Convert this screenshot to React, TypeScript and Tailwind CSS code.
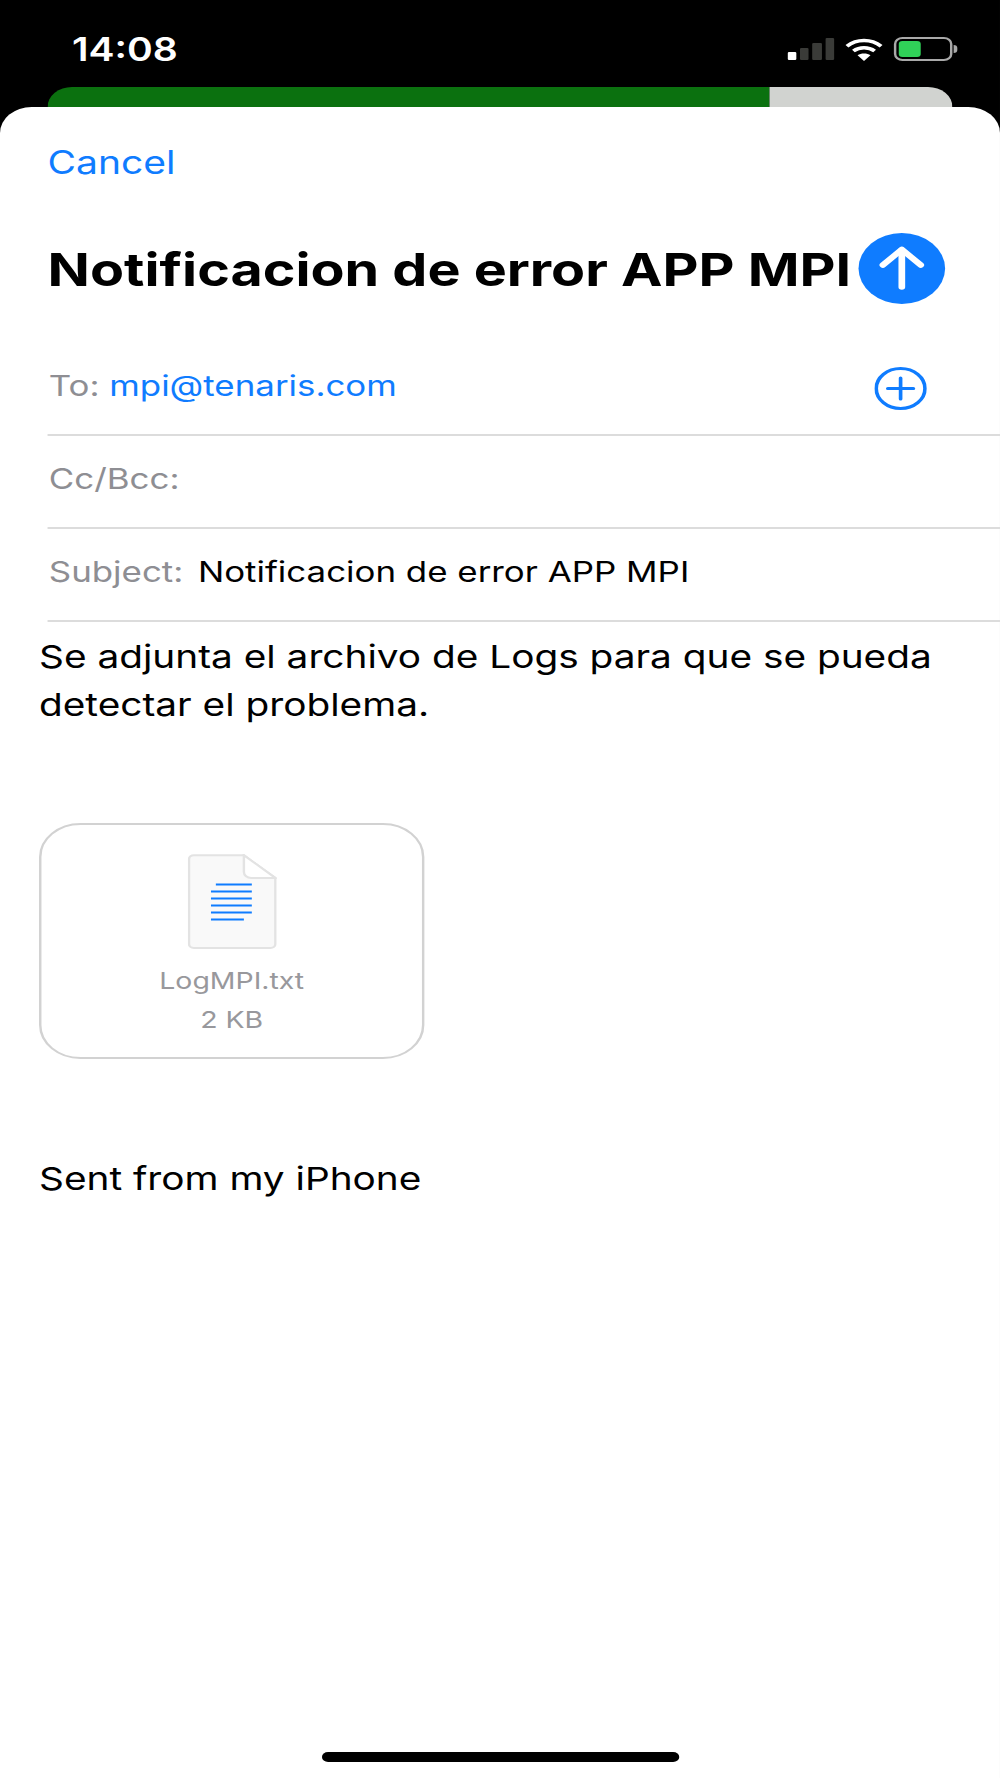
import React from "react";

const Wifi = () => (
  <svg width="31" height="23" viewBox="0 0 31 23" fill="none" stroke="#fff" strokeWidth="3.4">
    <path d="M1.5 8.2C9.5 .6 21.5 .6 29.5 8.2" />
    <path d="M6.8 13C11.8 8.6 19.2 8.6 24.2 13" />
    <path d="M15.5 23L10.2 17.2C13 14.8 18 14.8 20.8 17.2Z" fill="#fff" stroke="none" />
  </svg>
);

const Signal = () => (
  <div className="flex items-end gap-[3px] h-[22px]">
    <div className="w-[7px] h-[8px] rounded-[1px] bg-white" />
    <div className="w-[7px] h-[12px] rounded-[1px] bg-[#3a3b38]" />
    <div className="w-[8px] h-[17px] rounded-[1px] bg-[#3a3b38]" />
    <div className="w-[7px] h-[22px] rounded-[1px] bg-[#3a3b38]" />
  </div>
);

const Battery = () => (
  <div className="flex items-center gap-[1px]">
    <div className="w-[48px] h-[24px] rounded-[7px] border-2 border-[#a9a9a9] p-[2px] flex">
      <div className="w-[18px] rounded-[3px] bg-[#30d158]" />
    </div>
    <div className="w-[3px] h-[8px] rounded-r-[3px] bg-[#a9a9a9]" />
  </div>
);

const FileIcon = () => (
  <svg width="73" height="95" viewBox="0 0 73 95" fill="none">
    <path
      d="M5 1.2H46L71.8 24V90a4 4 0 0 1-4 4H5a4 4 0 0 1-4-4V5a4 4 0 0 1 4-3.8Z"
      fill="#f9f9f9"
      stroke="#e3e3e3"
      strokeWidth="2"
    />
    <path d="M46 1.2V18a6 6 0 0 0 6 6H71.8Z" fill="#fff" stroke="#e3e3e3" strokeWidth="2" />
    <g stroke="#0f7cff" strokeWidth="1.8">
      <path d="M23 30.5H52.5" />
      <path d="M19 37.5H52.5" />
      <path d="M19 44.5H52.5" />
      <path d="M19 51.5H52.5" />
      <path d="M19 58.5H52.5" />
      <path d="M19 65.5H46" />
    </g>
  </svg>
);

const App = () => {
  return (
    <div className="w-[820px] h-[1778px] bg-black flex flex-col overflow-hidden origin-left scale-x-[1.2195] font-['Inter',sans-serif] text-black">
      <div className="h-[87px] pt-[13px] pl-[59px] pr-[35px] flex items-center justify-between">
        <span className="text-white text-[32px] font-semibold">14:08</span>
        <div className="flex items-center gap-[9px] mt-[-2px]">
          <Signal />
          <Wifi />
          <Battery />
        </div>
      </div>

      <div className="h-[20px] mx-[39px] flex rounded-t-[20px] overflow-hidden">
        <div className="w-[592px] bg-[#0b710f]" />
        <div className="flex-1 bg-[#d1d3d0]" />
      </div>

      <div className="flex-1 flex flex-col bg-white rounded-t-[26px]">
        <div className="mt-[36px] h-[40px] pl-[39px] flex items-center text-[32px] text-[#0f7cff]">Cancel</div>

        <div className="mt-[49px] h-[72px] pl-[39px] pr-[45px] flex items-center justify-between">
          <h1 className="pt-[4px] text-[45.6px] leading-none font-bold whitespace-nowrap">Notificacion de error APP MPI</h1>
          <div className="w-[71px] h-[71px] shrink-0 rounded-full bg-[#0f7cff] flex items-center justify-center">
            <svg width="71" height="71" viewBox="0 0 71 71" fill="none" stroke="#fff" strokeWidth="5.5" strokeLinecap="round" strokeLinejoin="round">
              <path d="M35.5 54V17" />
              <path d="M20 32L35.5 16.5L51 32" />
            </svg>
          </div>
        </div>

        <div className="mt-[39px] ml-[39px] flex flex-col text-[28.6px] text-[#8e8e93]">
          <div className="h-[93px] pl-[1px] pr-[60px] pb-[5px] flex items-center gap-[8px] border-b-2 border-[#dcdcdc]">
            <span>To:</span>
            <span className="text-[#0f7cff]">mpi@tenaris.com</span>
            <svg className="ml-auto mt-[5px]" width="43" height="43" viewBox="0 0 43 43" fill="none" stroke="#0f7cff" strokeWidth="3" strokeLinecap="round">
              <circle cx="21.5" cy="21.5" r="20" />
              <path d="M11 21.5H32M21.5 11V32" />
            </svg>
          </div>
          <div className="h-[93px] pl-[1px] pb-[5px] flex items-center border-b-2 border-[#dcdcdc]">Cc/Bcc:</div>
          <div className="h-[93px] pl-[1px] pb-[5px] flex items-center gap-[12px] border-b-2 border-[#dcdcdc]">
            <span>Subject:</span>
            <span className="text-black">Notificacion de error APP MPI</span>
          </div>
        </div>

        <div className="pl-[32px] pt-[11px] text-[31.8px] leading-[48px]">
          <p>Se adjunta el archivo de Logs para que se pueda</p>
          <p>detectar el problema.</p>
        </div>

        <div className="mt-[94px] ml-[32px] w-[316px] h-[236px] pt-[29px] flex flex-col items-center rounded-[34px] border-2 border-[#d2d2d2] text-[23.3px] text-[#98989c]">
          <FileIcon />
          <span className="mt-[18px] leading-[28px]">LogMPI.txt</span>
          <span className="mt-[11px] leading-[28px]">2 KB</span>
        </div>

        <p className="mt-[96px] ml-[32px] text-[31.8px] leading-[48px]">Sent from my iPhone</p>

        <div className="mt-auto mb-[16px] mx-auto w-[293px] h-[10px] rounded-full bg-black" />
      </div>
    </div>
  );
};

export default App;
